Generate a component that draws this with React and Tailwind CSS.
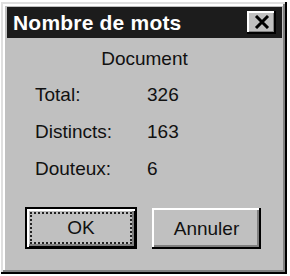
export default function App() {
  return (
    <div
      className="w-[290px] h-[276px] bg-white overflow-hidden pt-[2px] pl-[1px]"
      style={{ fontFamily: '"Liberation Sans", Arial, sans-serif' }}
    >
      <div className="w-[286px] h-[272px] bg-[#c0c0c0] pt-[5px] pl-[6px] pr-[5px] flex flex-col shadow-[inset_-2px_-2px_0_#000,inset_2px_2px_0_#dfdfdf,inset_-4px_-4px_0_#808080,inset_4px_4px_0_#fff]">
        <div className="h-[31px] bg-[#1c1c1c] flex items-center justify-between pl-[6px] pr-[6px]">
          <span className="text-white font-bold text-[21px] leading-[24px] tracking-[0.2px]">
            Nombre de mots
          </span>
          <div className="w-[29px] h-[23px] bg-[#c0c0c0] flex items-center justify-center shadow-[inset_-2px_-2px_0_#000,inset_2px_2px_0_#fff,inset_-3px_-3px_0_#808080]">
            <svg width="16" height="14" viewBox="0 0 16 14" className="mb-[1px]">
              <path d="M2 1 L14 13 M14 1 L2 13" stroke="#000" strokeWidth="3" fill="none" />
            </svg>
          </div>
        </div>
        <div className="mt-[10px] text-center text-[19px] leading-[22px] text-[#111]">Document</div>
        <div className="mt-[14px] ml-[28px] grid grid-cols-[112px_auto] gap-y-[15px] text-[19px] leading-[22px] text-[#111]">
          <span>Total:</span>
          <span>326</span>
          <span>Distincts:</span>
          <span>163</span>
          <span>Douteux:</span>
          <span>6</span>
        </div>
        <div className="mt-[27px] ml-[18px] flex items-start">
          <div className="w-[112px] h-[42px] border-2 border-black bg-[#c0c0c0] p-[3px] flex shadow-[inset_2px_2px_0_#fff,inset_-1px_-1px_0_#000,inset_-3px_-3px_0_#808080]">
            <div className="flex-1 border-2 border-dotted border-[#222] flex items-center justify-center text-[19px] leading-[22px] text-[#111]">
              OK
            </div>
          </div>
          <div className="ml-[15px] mt-[1px] w-[109px] h-[41px] bg-[#c0c0c0] flex items-center justify-center text-[19px] leading-[22px] text-[#111] shadow-[inset_-2px_-2px_0_#000,inset_2px_2px_0_#fff,inset_-4px_-4px_0_#808080]">
            Annuler
          </div>
        </div>
      </div>
    </div>
  );
}
